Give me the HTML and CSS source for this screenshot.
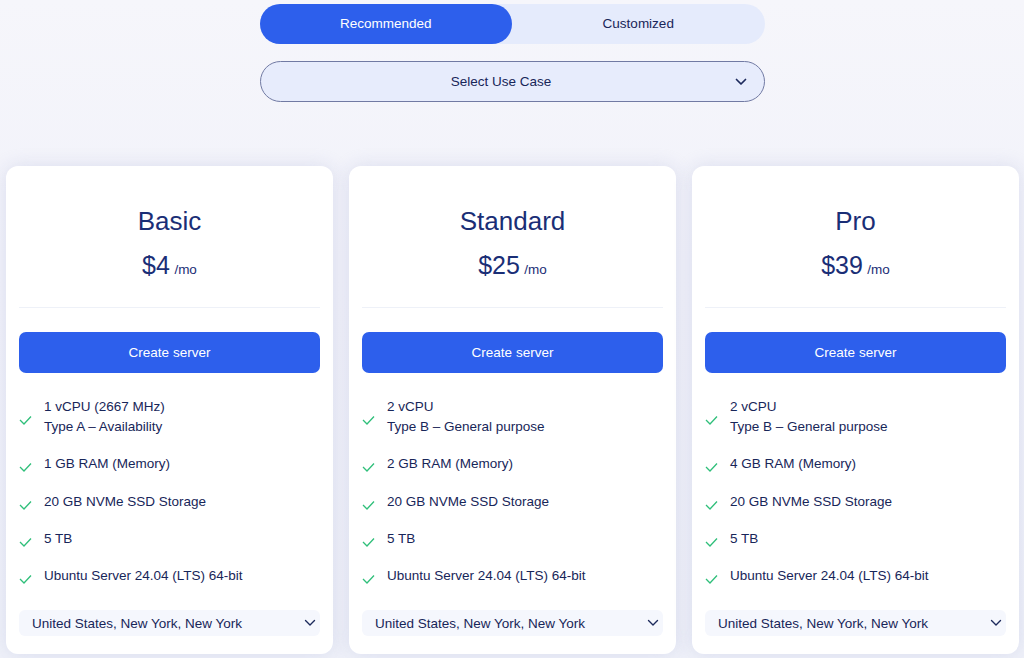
FILE: index.html
```html
<!DOCTYPE html>
<html lang="en">
<head>
<meta charset="utf-8">
<title>Plans</title>
<link rel="stylesheet" href="styles.css">
</head>
<body>
<div class="top">
  <div class="toggle">
    <button class="tab active">Recommended</button>
    <button class="tab">Customized</button>
  </div>
  <div class="usecase">
    <span>Select Use Case</span>
    <svg class="chev" width="12" height="8" viewBox="0 0 12 8"><path d="M1.5 1.5 L6 6 L10.5 1.5" fill="none" stroke="#1d2a5c" stroke-width="1.7" stroke-linecap="round" stroke-linejoin="round"/></svg>
  </div>
</div>

<div class="cards">
  <div class="card">
    <h2 class="name">Basic</h2>
    <div class="price"><span class="amt">$4</span> <span class="per">/mo</span></div>
    <hr class="divider">
    <button class="create">Create server</button>
    <ul class="features">
      <li><svg class="check" width="13" height="10" viewBox="0 0 13 10"><path d="M1 5 L5 9 L12 1.5" fill="none" stroke="#2fbf7a" stroke-width="1.3"/></svg><span>1 vCPU (2667 MHz)<br>Type A – Availability</span></li>
      <li><svg class="check" width="13" height="10" viewBox="0 0 13 10"><path d="M1 5 L5 9 L12 1.5" fill="none" stroke="#2fbf7a" stroke-width="1.3"/></svg><span>1 GB RAM (Memory)</span></li>
      <li><svg class="check" width="13" height="10" viewBox="0 0 13 10"><path d="M1 5 L5 9 L12 1.5" fill="none" stroke="#2fbf7a" stroke-width="1.3"/></svg><span>20 GB NVMe SSD Storage</span></li>
      <li><svg class="check" width="13" height="10" viewBox="0 0 13 10"><path d="M1 5 L5 9 L12 1.5" fill="none" stroke="#2fbf7a" stroke-width="1.3"/></svg><span>5 TB</span></li>
      <li><svg class="check" width="13" height="10" viewBox="0 0 13 10"><path d="M1 5 L5 9 L12 1.5" fill="none" stroke="#2fbf7a" stroke-width="1.3"/></svg><span>Ubuntu Server 24.04 (LTS) 64-bit</span></li>
    </ul>
    <div class="location"><span>United States, New York, New York</span><svg class="chev" width="12" height="8" viewBox="0 0 12 8"><path d="M1.5 1.5 L6 6 L10.5 1.5" fill="none" stroke="#1d2a5c" stroke-width="1.4" stroke-linecap="round" stroke-linejoin="round"/></svg></div>
  </div>

  <div class="card">
    <h2 class="name">Standard</h2>
    <div class="price"><span class="amt">$25</span> <span class="per">/mo</span></div>
    <hr class="divider">
    <button class="create">Create server</button>
    <ul class="features">
      <li><svg class="check" width="13" height="10" viewBox="0 0 13 10"><path d="M1 5 L5 9 L12 1.5" fill="none" stroke="#2fbf7a" stroke-width="1.3"/></svg><span>2 vCPU<br>Type B – General purpose</span></li>
      <li><svg class="check" width="13" height="10" viewBox="0 0 13 10"><path d="M1 5 L5 9 L12 1.5" fill="none" stroke="#2fbf7a" stroke-width="1.3"/></svg><span>2 GB RAM (Memory)</span></li>
      <li><svg class="check" width="13" height="10" viewBox="0 0 13 10"><path d="M1 5 L5 9 L12 1.5" fill="none" stroke="#2fbf7a" stroke-width="1.3"/></svg><span>20 GB NVMe SSD Storage</span></li>
      <li><svg class="check" width="13" height="10" viewBox="0 0 13 10"><path d="M1 5 L5 9 L12 1.5" fill="none" stroke="#2fbf7a" stroke-width="1.3"/></svg><span>5 TB</span></li>
      <li><svg class="check" width="13" height="10" viewBox="0 0 13 10"><path d="M1 5 L5 9 L12 1.5" fill="none" stroke="#2fbf7a" stroke-width="1.3"/></svg><span>Ubuntu Server 24.04 (LTS) 64-bit</span></li>
    </ul>
    <div class="location"><span>United States, New York, New York</span><svg class="chev" width="12" height="8" viewBox="0 0 12 8"><path d="M1.5 1.5 L6 6 L10.5 1.5" fill="none" stroke="#1d2a5c" stroke-width="1.4" stroke-linecap="round" stroke-linejoin="round"/></svg></div>
  </div>

  <div class="card">
    <h2 class="name">Pro</h2>
    <div class="price"><span class="amt">$39</span> <span class="per">/mo</span></div>
    <hr class="divider">
    <button class="create">Create server</button>
    <ul class="features">
      <li><svg class="check" width="13" height="10" viewBox="0 0 13 10"><path d="M1 5 L5 9 L12 1.5" fill="none" stroke="#2fbf7a" stroke-width="1.3"/></svg><span>2 vCPU<br>Type B – General purpose</span></li>
      <li><svg class="check" width="13" height="10" viewBox="0 0 13 10"><path d="M1 5 L5 9 L12 1.5" fill="none" stroke="#2fbf7a" stroke-width="1.3"/></svg><span>4 GB RAM (Memory)</span></li>
      <li><svg class="check" width="13" height="10" viewBox="0 0 13 10"><path d="M1 5 L5 9 L12 1.5" fill="none" stroke="#2fbf7a" stroke-width="1.3"/></svg><span>20 GB NVMe SSD Storage</span></li>
      <li><svg class="check" width="13" height="10" viewBox="0 0 13 10"><path d="M1 5 L5 9 L12 1.5" fill="none" stroke="#2fbf7a" stroke-width="1.3"/></svg><span>5 TB</span></li>
      <li><svg class="check" width="13" height="10" viewBox="0 0 13 10"><path d="M1 5 L5 9 L12 1.5" fill="none" stroke="#2fbf7a" stroke-width="1.3"/></svg><span>Ubuntu Server 24.04 (LTS) 64-bit</span></li>
    </ul>
    <div class="location"><span>United States, New York, New York</span><svg class="chev" width="12" height="8" viewBox="0 0 12 8"><path d="M1.5 1.5 L6 6 L10.5 1.5" fill="none" stroke="#1d2a5c" stroke-width="1.4" stroke-linecap="round" stroke-linejoin="round"/></svg></div>
  </div>
</div>
</body>
</html>
```

FILE: styles.css
```css
* { box-sizing: border-box; }

html, body {
  margin: 0;
  height: 100%;
}

body {
  background: linear-gradient(180deg, #f6f6fb 0%, #f1f2fa 40%, #eff1f9 100%);
  font-family: "Liberation Sans", Arial, sans-serif;
  color: #182659;
  overflow: hidden;
}

.top {
  padding-top: 4px;
  display: flex;
  flex-direction: column;
  align-items: center;
}

.toggle {
  width: 505px;
  height: 40px;
  display: flex;
  background: #e5ebfc;
  border-radius: 20px;
}

.tab {
  flex: 1 1 0;
  border: 0;
  background: transparent;
  font-family: inherit;
  font-size: 13.5px;
  color: #182659;
  border-radius: 20px;
  padding: 0 0 1px;
  cursor: pointer;
}

.tab.active {
  background: #2d5fec;
  color: #ffffff;
}

.usecase {
  margin-top: 17px;
  width: 505px;
  height: 41px;
  border: 1px solid #717aa3;
  border-radius: 21px;
  background: #e7ecfc;
  display: flex;
  align-items: center;
  justify-content: center;
  padding: 0 22px 1px 0;
  position: relative;
  font-size: 13.5px;
  color: #182659;
}

.usecase .chev {
  position: absolute;
  right: 17px;
  top: 16px;
}

.cards {
  margin-top: 64px;
  padding: 0 5px 0 6px;
  display: grid;
  grid-template-columns: repeat(3, 1fr);
  gap: 16px;
}

.card {
  background: #ffffff;
  border-radius: 12px;
  padding: 40px 13px 18px;
  box-shadow: 0 0 18px rgba(190, 196, 225, 0.45);
}

.name {
  margin: 0;
  text-align: center;
  font-size: 26px;
  line-height: 30px;
  font-weight: 400;
  color: #1a2e76;
}

.price {
  margin-top: 15px;
  text-align: center;
  line-height: 28px;
  color: #1a2e76;
}

.amt {
  font-size: 25px;
}

.per {
  font-size: 13.5px;
}

.divider {
  margin: 23px 0 0;
  border: 0;
  height: 1px;
  background: #eef1f8;
}

.create {
  display: block;
  width: 100%;
  margin-top: 24px;
  height: 41px;
  border: 0;
  border-radius: 7px;
  background: #2d5fec;
  color: #ffffff;
  font-family: inherit;
  font-size: 13.5px;
  padding: 0 0 1px;
  cursor: pointer;
}

.features {
  list-style: none;
  margin: 24px 0 0;
  padding: 0;
  display: flex;
  flex-direction: column;
  gap: 17.3px;
}

.features li {
  display: flex;
  align-items: center;
  font-size: 13.5px;
  line-height: 20px;
  color: #182659;
}

.check {
  flex: none;
  margin: 6px 12px 0 0;
}

.location {
  margin-top: 24px;
  height: 26px;
  border-radius: 6px;
  background: #f5f7fd;
  display: flex;
  align-items: center;
  justify-content: space-between;
  padding: 0 4px 0 13px;
  font-size: 13.5px;
  color: #182659;
}
```
